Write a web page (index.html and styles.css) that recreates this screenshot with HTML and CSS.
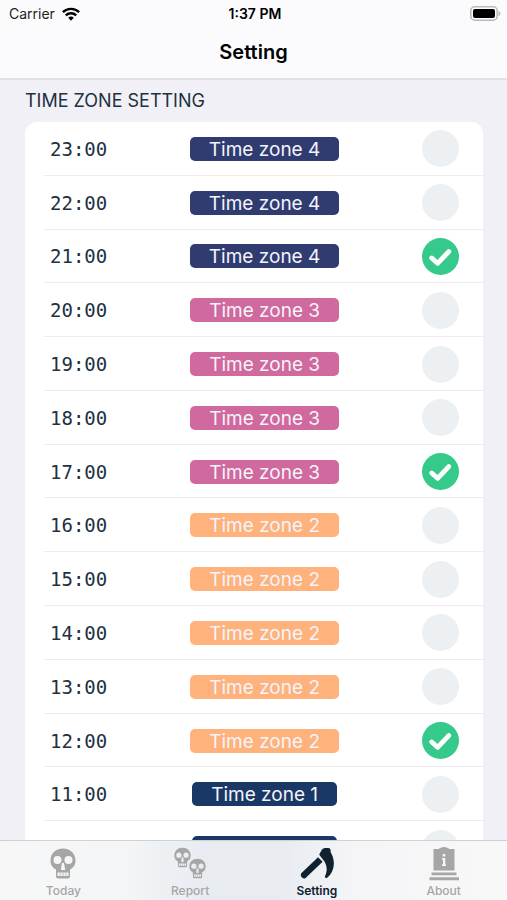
FILE: index.html
```html
<!DOCTYPE html>
<html lang="en">
<head>
<meta charset="utf-8">
<meta name="viewport" content="width=device-width, initial-scale=1">
<title>Setting</title>
<link rel="stylesheet" href="styles.css">
</head>
<body>
<svg class="sprite" aria-hidden="true">
  <symbol id="skull" viewBox="0 0 26 30">
    <path fill-rule="evenodd" d="M13 0C5.500 0 .5 5 .5 12c0 4 1.500 7 5.500 9v7q0 2 2 2h10q2 0 2-2v-7c4-2 5.500-5 5.500-9C25.500 5 20.500 0 13 0ZM7.500 7.500a4 4 0 1 1 0 8 4 4 0 1 1 0-8ZM18.500 7.500a4 4 0 1 1 0 8 4 4 0 1 1 0-8ZM12 14.500h2l1.200 7h-4.400ZM7.500 24h11v3.500h-11Z"/>
    <path d="M9.800 24h.7v3.500h-.7ZM12.700 24h.7v3.500h-.7ZM15.600 24h.7v3.500h-.7Z"/>
  </symbol>
  <symbol id="tick" viewBox="0 0 38 38">
    <path d="M10 20.500l6 5.500L27.500 14" fill="none" stroke="#fff" stroke-width="5" stroke-linecap="round" stroke-linejoin="round"/>
  </symbol>
</svg>

<header class="top">
  <div class="status">
    <span class="carrier">Carrier
      <svg width="18" height="14" viewBox="0 0 18 14" fill="none" stroke="#000" stroke-width="2.400" aria-hidden="true">
        <path d="M.9 5.200a11.500 11.500 0 0 1 16.200 0M3.800 8.400a7.400 7.400 0 0 1 10.400 0"/>
        <path d="M9 13.800l-2.800-3a4 4 0 0 1 5.600 0Z" fill="#000" stroke="none"/>
      </svg>
    </span>
    <span class="clock">1:37 PM</span>
    <svg class="battery" width="31" height="15" viewBox="0 0 31 15" aria-hidden="true">
      <rect x=".8" y=".8" width="26.400" height="13.400" rx="4" fill="#fff" stroke="#b9b9b9" stroke-width="1.600"/>
      <rect x="3" y="3" width="22" height="9" rx="2" fill="#000"/>
      <path d="M28.500 5q2 .5 2 2.500t-2 2.500Z" fill="#b9b9b9"/>
    </svg>
  </div>
  <h1 class="title">Setting</h1>
</header>

<main class="content">
  <h2 class="section">TIME ZONE SETTING</h2>
  <div class="list">
    <label class="row"><time>23:00</time><span class="zone z4">Time zone 4</span><span class="check"><input type="checkbox"><svg><use href="#tick"/></svg></span></label>
    <label class="row"><time>22:00</time><span class="zone z4">Time zone 4</span><span class="check"><input type="checkbox"><svg><use href="#tick"/></svg></span></label>
    <label class="row"><time>21:00</time><span class="zone z4">Time zone 4</span><span class="check"><input type="checkbox" checked><svg><use href="#tick"/></svg></span></label>
    <label class="row"><time>20:00</time><span class="zone z3">Time zone 3</span><span class="check"><input type="checkbox"><svg><use href="#tick"/></svg></span></label>
    <label class="row"><time>19:00</time><span class="zone z3">Time zone 3</span><span class="check"><input type="checkbox"><svg><use href="#tick"/></svg></span></label>
    <label class="row"><time>18:00</time><span class="zone z3">Time zone 3</span><span class="check"><input type="checkbox"><svg><use href="#tick"/></svg></span></label>
    <label class="row"><time>17:00</time><span class="zone z3">Time zone 3</span><span class="check"><input type="checkbox" checked><svg><use href="#tick"/></svg></span></label>
    <label class="row"><time>16:00</time><span class="zone z2">Time zone 2</span><span class="check"><input type="checkbox"><svg><use href="#tick"/></svg></span></label>
    <label class="row"><time>15:00</time><span class="zone z2">Time zone 2</span><span class="check"><input type="checkbox"><svg><use href="#tick"/></svg></span></label>
    <label class="row"><time>14:00</time><span class="zone z2">Time zone 2</span><span class="check"><input type="checkbox"><svg><use href="#tick"/></svg></span></label>
    <label class="row"><time>13:00</time><span class="zone z2">Time zone 2</span><span class="check"><input type="checkbox"><svg><use href="#tick"/></svg></span></label>
    <label class="row"><time>12:00</time><span class="zone z2">Time zone 2</span><span class="check"><input type="checkbox" checked><svg><use href="#tick"/></svg></span></label>
    <label class="row"><time>11:00</time><span class="zone z1">Time zone 1</span><span class="check"><input type="checkbox"><svg><use href="#tick"/></svg></span></label>
    <label class="row"><time>10:00</time><span class="zone z1">Time zone 1</span><span class="check"><input type="checkbox"><svg><use href="#tick"/></svg></span></label>
  </div>
</main>

<nav class="tabs">
  <a class="tab" href="#today">
    <svg width="36" height="34" viewBox="0 0 36 34" aria-hidden="true"><use href="#skull" x="5" y="1" width="26" height="31"/></svg>
    Today
  </a>
  <a class="tab" href="#report">
    <svg width="36" height="34" viewBox="0 0 36 34" aria-hidden="true"><use href="#skull" x="2" y="0" width="17" height="21"/><use href="#skull" x="17" y="11" width="17" height="21"/></svg>
    Report
  </a>
  <a class="tab active" href="#setting" aria-current="page">
    <svg width="36" height="34" viewBox="0 0 36 34" aria-hidden="true">
      <path d="M19 10.200L23.600 14.800 6.600 31Q4.800 32.300 3 30.600T2 26.500Z"/>
      <path d="M20.600 8.200Q20 7.200 21 6L23 2.500Q24 1 26 1h3.500q1.700 0 2 1.800l.3 2.700C36.500 13 36 24 28.500 30.500c-1.500 1-3 0-2.400-1.500 2.400-5.500 2-9.500-.6-14.500Z"/>
    </svg>
    Setting
  </a>
  <a class="tab" href="#about">
    <svg width="36" height="34" viewBox="0 0 36 34" aria-hidden="true">
      <path fill-rule="evenodd" d="M7.500 23.500V2h5Q18-2 23.500 2h5v21.500ZM16.700 7v2.600h2.600V7ZM16 11v1.500h1v5h-1V19h4v-1.500h-.7V11Z"/>
      <path d="M5.500 25.500h25v2.700h-25ZM3.500 30.300h29.500v2.900H3.500Z"/>
    </svg>
    About
  </a>
</nav>
</body>
</html>
```
FILE: styles.css
```css
* {
  box-sizing: border-box;
}

body {
  margin: 0;
  height: 100vh;
  overflow: hidden;
  display: flex;
  flex-direction: column;
  background: #f1f0f6;
  color: #22313f;
  font-family: Inter, "Liberation Sans", sans-serif;
}

.sprite {
  position: absolute;
  width: 0;
  height: 0;
}

.top {
  flex: none;
  background: #fbfbfd;
  border-bottom: 2px solid #e2e2e6;
  color: #000;
}

.status {
  display: grid;
  grid-template-columns: 1fr auto 1fr;
  align-items: center;
  height: 27px;
  padding: 0 6px 0 9px;
  font-size: 14px;
}

.carrier {
  display: flex;
  align-items: center;
  gap: 7px;
  color: #222;
}

.clock {
  font-weight: 600;
}

.battery {
  justify-self: end;
}

.title {
  margin: 0;
  height: 51px;
  font-size: 20px;
  line-height: 50px;
  font-weight: 600;
  text-align: center;
}

.content {
  flex: 1;
  min-height: 0;
  overflow: hidden auto;
  scrollbar-width: none;
  padding: 0 24px 0 25px;
}

.section {
  margin: 0;
  font-size: 18px;
  line-height: 42px;
  font-weight: 400;
}

.list {
  display: grid;
  grid-auto-rows: 1fr;
  min-height: 753px;
  background: #fff;
  border-radius: 12px;
}

.row {
  display: flex;
  align-items: center;
  justify-content: space-between;
  margin-left: 19px;
  padding: 1px 24px 0 6px;
  border-bottom: 1px solid #ececef;
}

.row time {
  font-family: "DejaVu Sans Mono", monospace;
  font-size: 19px;
}

.zone {
  padding: 1px 19px 0;
  border-radius: 5px;
  color: #f4f4fb;
  font-size: 19px;
  line-height: 23px;
}

.z4 {
  background: #303c6f;
}

.z3 {
  background: #d0699d;
}

.z2 {
  background: #ffb27b;
}

.z1 {
  background: #193866;
}

.check {
  display: grid;
  width: 37px;
  height: 37px;
}

.check input,
.check svg {
  grid-area: 1 / 1;
  width: 100%;
  height: 100%;
  margin: 0;
}

.check input {
  appearance: none;
  border-radius: 50%;
  background: #edf0f3;
}

.check input:checked {
  background: #35ca8b;
}

.check svg {
  pointer-events: none;
  visibility: hidden;
}

.check input:checked + svg {
  visibility: visible;
}

.tabs {
  flex: none;
  display: grid;
  grid-template-columns: repeat(4, 1fr);
  height: 60px;
  border-top: 1px solid #cfd1d6;
  background: linear-gradient(90deg, #f7f7f8 0%, #f3f5f6 25%, #e8ecf1 40%, #e8ecf1 56%, #f5f5f7 70%, #f8f8f9 100%);
}

.tab {
  display: flex;
  flex-direction: column;
  align-items: center;
  padding-top: 6px;
  gap: 2px;
  color: #a6a6a6;
  fill: currentColor;
  font-size: 12px;
  line-height: 16px;
  font-weight: 500;
  text-decoration: none;
}

.tab.active {
  color: #0f2230;
  font-weight: 600;
}
```
